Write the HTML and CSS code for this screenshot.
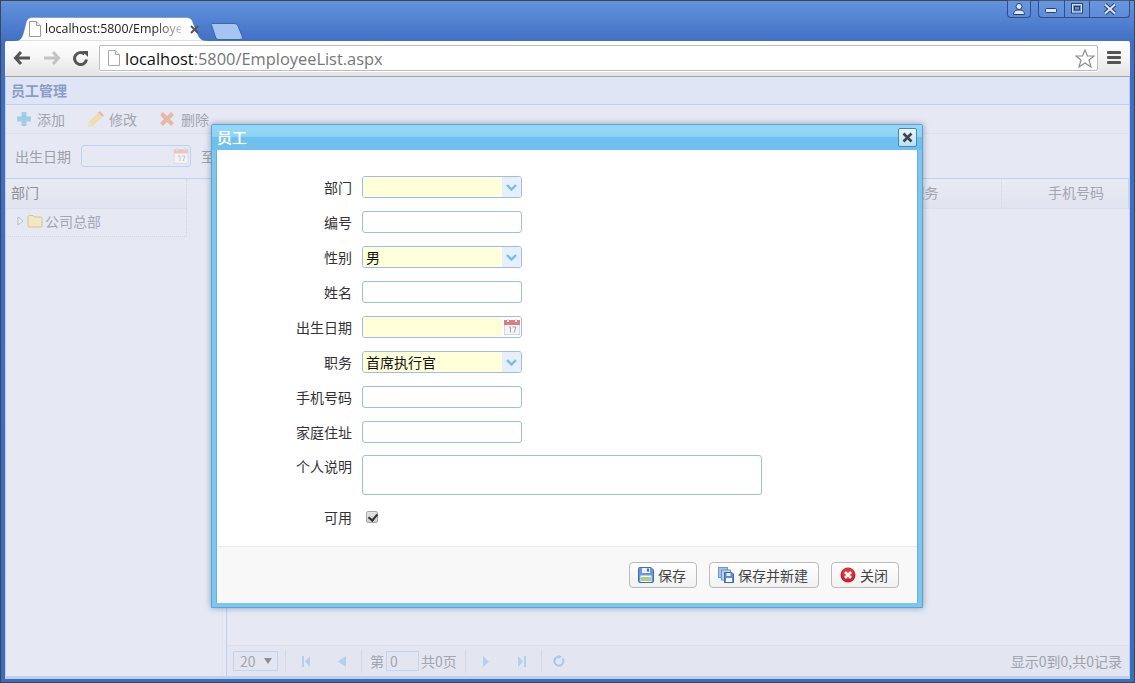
FILE: index.html
```html
<!DOCTYPE html>
<html lang="zh">
<head>
<meta charset="utf-8">
<title>员工管理</title>
<link rel="stylesheet" href="styles.css">
</head>
<body>
<div class="frame">
  <header class="titlebar">
    <div class="tabs">
      <div class="tab">
        <svg class="tab-shape" width="197" height="24" viewBox="0 0 197 24"><path d="M0 24C7 24 8 21 10 14L12 6C13 2 15 0.500 19 0.500H172C176 0.500 178 2 179 6L184 18C186 23 189 24 197 24Z" fill="url(#tabfill)" stroke="#3f68ad" stroke-opacity=".35"/><defs><linearGradient id="tabfill" x1="0" y1="0" x2="0" y2="1"><stop offset="0" stop-color="#fff"/><stop offset="1" stop-color="#fbfbfb"/></linearGradient></defs></svg>
        <svg class="page-ic" width="13" height="16" viewBox="0 0 13 16"><path d="M1.500.5H8.500L12.500 4.500V15.500H1.500Z" fill="#fff" stroke="#9a9a9a"/><path d="M8.500.5V4.500H12.500" fill="#eee" stroke="#9a9a9a"/></svg>
        <span class="tab-title">localhost:5800/Employe</span>
        <svg class="tab-x" width="9" height="9" viewBox="0 0 9 9"><path d="M1 1L8 8M8 1L1 8" stroke="#555" stroke-width="2"/></svg>
      </div>
      <svg class="newtab" width="32" height="17" viewBox="0 0 32 17"><path d="M1 .5H23C25 .5 26 1.500 27 3L31 13C32 15 31 16.500 29 16.500H8C6 16.500 5 15.500 4.500 14L.5 2C.2 1 .5 .5 1 .5Z" fill="#a5c5f0" stroke="#3c66ad"/></svg>
    </div>
    <div class="winctl">
      <div class="winbtn user"><svg width="14" height="12" viewBox="0 0 14 12"><circle cx="7" cy="3.500" r="3" fill="#dbe6f8" stroke="#2b3f66"/><path d="M1.500 11.500C1.500 8 4 7 7 7S12.500 8 12.500 11.500Z" fill="#dbe6f8" stroke="#2b3f66"/></svg></div>
      <div class="wingroup">
        <div class="winbtn min"><svg width="13" height="6" viewBox="0 0 13 6"><rect x=".5" y=".5" width="11" height="4" rx="1" fill="#dbe6f8" stroke="#2b3f66"/></svg></div>
        <div class="winbtn max"><svg width="13" height="11" viewBox="0 0 13 11"><rect x=".5" y=".5" width="11" height="9.500" fill="none" stroke="#2b3f66"/><rect x="1.500" y="1.500" width="9" height="7.500" fill="none" stroke="#dbe6f8" stroke-width="1"/><rect x="3.500" y="3.500" width="5" height="3.500" fill="#5d8bd3" stroke="#2b3f66"/></svg></div>
        <div class="winbtn close"><svg width="16" height="12" viewBox="0 0 16 12"><path d="M3 1.500L13 10.500M13 1.500L3 10.500" stroke="#2b3f66" stroke-width="4"/><path d="M3 1.500L13 10.500M13 1.500L3 10.500" stroke="#dbe6f8" stroke-width="2"/></svg></div>
      </div>
    </div>
  </header>

  <div class="navbar">
    <svg class="nav-ic" width="18" height="16" viewBox="0 0 18 16"><path d="M8 2L2.500 8L8 14M3 8H17" fill="none" stroke="#555" stroke-width="3"/></svg>
    <svg class="nav-ic" width="18" height="16" viewBox="0 0 18 16"><path d="M10 2L15.500 8L10 14M15 8H1" fill="none" stroke="#c3c3c3" stroke-width="3"/></svg>
    <svg class="nav-ic" width="18" height="16" viewBox="0 0 18 16"><path d="M14.500 9.500A6 6 0 1 1 12.500 4" fill="none" stroke="#555" stroke-width="3"/><path d="M10 1H16V7Z" fill="#555"/></svg>
    <div class="omnibox">
      <svg class="omni-page" width="13" height="16" viewBox="0 0 13 16"><path d="M1.500.5H8.500L12.500 4.500V15.500H1.500Z" fill="#fff" stroke="#aaa"/><path d="M8.500.5V4.500H12.500" fill="#eee" stroke="#aaa"/></svg>
      <span class="url"><b>localhost</b>:5800/EmployeeList.aspx</span>
      <svg class="star" width="20" height="19" viewBox="0 0 20 19"><path d="M10 1L12.500 7H19L14 11L16 18L10 14L4 18L6 11L1 7H7.500Z" fill="#fff" stroke="#8f8f8f" stroke-width="1.200"/></svg>
    </div>
    <div class="menu"><i></i><i></i><i></i></div>
  </div>

  <main class="page">
    <h1 class="page-title">员工管理</h1>
    <div class="toolbar">
      <span class="tool add">
        <svg width="16" height="16" viewBox="0 0 16 16"><path d="M5.500 1H10.500V5.500H15V10.500H10.500V15H5.500V10.500H1V5.500H5.500Z" fill="#9fcdea"/></svg>添加
      </span>
      <span class="tool edit">
        <svg width="17" height="17" viewBox="0 0 16 16"><path d="M.5 15.500L2 10L10.500 1.500L14.500 5.500L6 14Z" fill="#f0dcae"/><path d="M10.500 1.500L12 0L16 4L14.500 5.500Z" fill="#e8b9a4"/><path d="M.5 15.500L2 10L6 14Z" fill="#e9e2d0"/></svg>修改
      </span>
      <span class="tool del">
        <svg width="16" height="16" viewBox="0 0 16 16"><path d="M1 4L4 1L8 5L12 1L15 4L11 8L15 12L12 15L8 11L4 15L1 12L5 8Z" fill="#e6b9a4"/></svg>删除
      </span>
    </div>
    <div class="search">
      <label class="search-label">出生日期</label>
      <span class="search-date">
        <svg class="cal" width="16" height="16" viewBox="0 0 16 16"><rect x="1" y="1.500" width="14" height="14" fill="#f3f3f5" stroke="#dcdce2"/><rect x="1" y="1.500" width="14" height="4" fill="#eec3c3"/><rect x="3.500" y="0" width="2" height="3" fill="#ddd"/><rect x="10.500" y="0" width="2" height="3" fill="#ddd"/><path d="M5 8H7V13M9 8H12L10 13" fill="none" stroke="#c2c6cf"/></svg>
      </span>
      <span class="search-to">至</span>
    </div>
    <div class="panes">
      <aside class="tree">
        <div class="tree-head"><span>部门</span></div>
        <div class="tree-row">
          <svg width="7" height="10" viewBox="0 0 7 10"><path d="M1 1L6 5L1 9Z" fill="#f2f3f7" stroke="#b7bbc6"/></svg>
          <svg width="16" height="14" viewBox="0 0 16 14"><path d="M1 3C1 2 1.500 1.500 2.500 1.500H6L7.500 3H13.500C14.500 3 15 3.500 15 4.500V12C15 12.500 14.500 13 14 13H2C1.500 13 1 12.500 1 12Z" fill="#f2e8c4" stroke="#d2c594"/></svg>
          <span>公司总部</span>
        </div>
      </aside>
      <div class="splitter"></div>
      <section class="grid">
        <div class="grid-head">
          <span class="col-spacer"></span>
          <span class="col col-job">职务</span>
          <span class="col col-phone">手机号码</span>
        </div>
        <div class="grid-body"></div>
        <footer class="pager">
          <span class="pg-size">20<svg width="8" height="6" viewBox="0 0 8 6"><path d="M0 0H8L4 6Z" fill="#8a8d96"/></svg></span>
          <i class="pg-sep sep-first"></i>
          <span class="pg-btn"><svg width="8" height="11" viewBox="0 0 8 11"><path d="M0 0H2V11H0ZM8 0V11L3 5.500Z" fill="#b5d0ec"/></svg></span>
          <span class="pg-btn"><svg width="8" height="11" viewBox="0 0 8 11"><path d="M8 0V11L0 5.500Z" fill="#b5d0ec"/></svg></span>
          <i class="pg-sep"></i>
          <span class="pg-text pg-page">第</span>
          <span class="pg-input">0</span>
          <span class="pg-text">共0页</span>
          <i class="pg-sep sep-total"></i>
          <span class="pg-btn"><svg width="6" height="11" viewBox="0 0 6 11"><path d="M0 0V11L6 5.500Z" fill="#b5d0ec"/></svg></span>
          <span class="pg-btn"><svg width="8" height="11" viewBox="0 0 8 11"><path d="M6 0H8V11H6ZM0 0V11L5 5.500Z" fill="#b5d0ec"/></svg></span>
          <i class="pg-sep"></i>
          <span class="pg-btn pg-refresh"><svg width="12" height="12" viewBox="0 0 12 12"><path d="M9.500 3.500A4.500 4.500 0 1 1 5 1.800" fill="none" stroke="#a4c8e8" stroke-width="2"/><path d="M5 0L9 1.500L5.500 4Z" fill="#a4c8e8"/></svg></span>
          <span class="pg-info">显示0到0,共0记录</span>
        </footer>
      </section>
    </div>
  </main>
</div>

<div class="dialog">
  <div class="dlg-head">
    <span class="dlg-title">员工</span>
    <button class="dlg-close" type="button"><svg width="11" height="11" viewBox="0 0 11 11"><path d="M1.500 1.500L9.500 9.500M9.500 1.500L1.500 9.500" stroke="#444" stroke-width="2.600"/></svg></button>
  </div>
  <div class="dlg-main">
    <form class="form">
      <div class="row"><label>部门</label><span class="field req select"><span class="val"></span><span class="trig"><svg width="11" height="7" viewBox="0 0 11 7"><path d="M1 1L5.500 5.500L10 1" fill="none" stroke="#74bcef" stroke-width="2.400"/></svg></span></span></div>
      <div class="row"><label>编号</label><span class="field"></span></div>
      <div class="row"><label>性别</label><span class="field req select"><span class="val">男</span><span class="trig"><svg width="11" height="7" viewBox="0 0 11 7"><path d="M1 1L5.500 5.500L10 1" fill="none" stroke="#74bcef" stroke-width="2.400"/></svg></span></span></div>
      <div class="row"><label>姓名</label><span class="field"></span></div>
      <div class="row"><label>出生日期</label><span class="field req select"><span class="val"></span><span class="trig cal-trig"><svg width="16" height="16" viewBox="0 0 16 16"><rect x=".5" y="1.500" width="15" height="14" fill="#f4f4f4" stroke="#d8d8d8"/><rect x="0" y="1" width="16" height="5" fill="#e27b7b"/><rect x="3" y="0" width="2" height="3" fill="#e8e8e8"/><rect x="11" y="0" width="2" height="3" fill="#e8e8e8"/><path d="M5 8H6.500V13.500M8.500 8H12L10 13.500" fill="none" stroke="#9aa3ad"/></svg></span></span></div>
      <div class="row"><label>职务</label><span class="field req select"><span class="val">首席执行官</span><span class="trig"><svg width="11" height="7" viewBox="0 0 11 7"><path d="M1 1L5.500 5.500L10 1" fill="none" stroke="#74bcef" stroke-width="2.400"/></svg></span></span></div>
      <div class="row"><label>手机号码</label><span class="field"></span></div>
      <div class="row"><label>家庭住址</label><span class="field"></span></div>
      <div class="row row-area"><label>个人说明</label><span class="area"></span></div>
      <div class="row row-check"><label>可用</label><input class="check" type="checkbox" checked></div>
    </form>
    <div class="dlg-foot">
      <button class="btn" type="button"><svg width="16" height="16" viewBox="0 0 16 16"><path d="M.5 1.500C.5 1 1 .5 1.500 .5H13L15.500 3V14.500C15.500 15 15 15.500 14.500 15.500H1.500C1 15.500 .5 15 .5 14.500Z" fill="#6d97d6" stroke="#3f6cb0"/><rect x="4" y="1" width="8" height="5" fill="#e9eff8"/><rect x="9" y="1.500" width="2" height="3" fill="#3f6cb0"/><rect x="2.500" y="8.500" width="11" height="6.500" fill="#fff"/><path d="M3 11H13M3 13H13" stroke="#8cc06a" stroke-width="1.500"/></svg>保存</button>
      <button class="btn" type="button"><svg width="16" height="16" viewBox="0 0 16 16"><rect x=".5" y=".5" width="9" height="10" fill="#a6c1e6" stroke="#6f95cc"/><rect x="3.500" y="3" width="9" height="10" fill="#bcd0ec" stroke="#6f95cc"/><path d="M6.500 5.500H14L15.500 7V15.500H6.500Z" fill="#5f8cd0" stroke="#3f6cb0"/><rect x="8" y="11" width="6" height="4" fill="#fff"/><rect x="8.500" y="6" width="4" height="3" fill="#e9eff8"/></svg>保存并新建</button>
      <button class="btn" type="button"><svg width="16" height="16" viewBox="0 0 16 16"><circle cx="8" cy="8" r="7.500" fill="#d01f2a"/><circle cx="8" cy="6.500" r="5.500" fill="#e8454d" opacity=".6"/><path d="M5 5L11 11M11 5L5 11" stroke="#fff" stroke-width="2.600"/></svg>关闭</button>
    </div>
  </div>
</div>
</body>
</html>
```

FILE: styles.css
```css
* { box-sizing: border-box; }
html, body { margin: 0; height: 683px; overflow: hidden; }
body { font-family: "Noto Sans CJK SC", "Open Sans", sans-serif; font-size: 14px; color: #333; background: #3d6bbd; }

.frame {
  height: 683px;
  display: flex;
  flex-direction: column;
  padding: 0 4px 3px 4px;
  border: 1px solid #3d4654;
  background: linear-gradient(#6393dc 0, #3f6ec4 42px, #3d6bbd 100%);
}

.titlebar { height: 40px; display: flex; justify-content: space-between; flex: none; }
.tabs { display: flex; align-items: flex-end; padding-left: 9px; }
.tab { position: relative; width: 197px; height: 24px; display: flex; align-items: center; padding: 0 0 0 14px; }
.tab-shape { position: absolute; left: 0; top: 0; }
.page-ic, .tab-title, .tab-x { position: relative; }
.tab-title { margin-left: 4px; width: 136px; white-space: nowrap; font: 12.4px/24px "Open Sans", sans-serif; color: #222; -webkit-mask-image: linear-gradient(90deg, #000 80%, rgba(0, 0, 0, .25)); mask-image: linear-gradient(90deg, #000 80%, rgba(0, 0, 0, .25)); }
.tab-x { margin-left: 9px; }
.newtab { margin: 0 0 1px 0; }

.winctl { display: flex; gap: 7px; align-items: flex-start; margin-top: -1px; }
.winbtn { height: 18px; display: flex; align-items: center; justify-content: center; border: 1px solid #2f4f86; border-top: 0; background: rgba(120, 165, 230, .25); }
.user { width: 24px; border-radius: 0 0 4px 4px; }
.wingroup { display: flex; }
.min { width: 26px; border-radius: 0 0 0 4px; border-right: 0; padding-top: 5px; }
.max { width: 25px; border-right: 0; }
.close { width: 41px; border-radius: 0 0 4px 0; }

.navbar { height: 36px; flex: none; display: flex; align-items: center; padding: 0 9px 0 8px; background: linear-gradient(#fff, #f6f6f6 45%, #e3e3e3); border-bottom: 1px solid #a5a5a5; border-radius: 2px 2px 0 0; }
.nav-ic { margin: 0 11px 2px 0; flex: none; }
.nav-ic:first-child { margin-right: 12px; }
.nav-ic:nth-child(3) { margin-right: 9px; }
.omnibox { flex: 1; height: 26px; margin-top: -1px; display: flex; align-items: center; padding: 0 2px 0 7px; background: #fff; border: 1px solid #bdbdbd; border-radius: 2px; box-shadow: 0 1px 0 #fff; }
.omni-page { flex: none; }
.url { margin: 2px 0 0 5px; flex: 1; font: 16.4px/24px "Open Sans", sans-serif; color: #767676; white-space: nowrap; }
.url b { font-weight: 400; color: #111; }
.menu { width: 14px; margin-left: 9px; margin-top: -2px; display: flex; flex-direction: column; gap: 2px; }
.menu i { height: 3px; background: #555; border-radius: 1px; }

.page { flex: 1; min-height: 0; display: flex; flex-direction: column; background: #e6e9f4; border-left: 1px solid #bcd0ef; color: #9a9ca8; border-bottom: 3px solid #bcd0ef; border-right: 1px solid #bcd0ef; }
.page-title { margin: 0; height: 28px; flex: none; padding-left: 5px; font: 700 14px/27px "Noto Sans CJK SC", sans-serif; color: #8b9dc6; background: #dfe5f4; border-bottom: 1px solid #bcd0ef; }

.toolbar { height: 29px; flex: none; display: flex; align-items: center; border-bottom: 1px solid #dde1ec; padding-left: 10px; }
.tool { display: flex; align-items: center; gap: 5px; line-height: 20px; color: #a2a4ae; }
.tool svg { flex: none; }
.add { width: 71px; }
.edit { width: 72px; }
.del { gap: 6px; }

.search { height: 44px; flex: none; display: flex; align-items: center; padding-left: 9px; color: #9e9fa6; }
.search-label { width: 66px; }
.search-date { width: 110px; height: 22px; border: 1px solid #bfd2f2; border-radius: 3px; display: flex; justify-content: flex-end; align-items: center; padding-right: 1px; }
.search-to { margin-left: 10px; }

.panes { flex: 1; min-height: 0; display: flex; }
.tree { width: 216px; flex: none; border-top: 1px solid #bcd0ef; }
.tree-head { width: 181px; height: 30px; padding-left: 5px; line-height: 27px; background: linear-gradient(#e9ebf4, #e1e4ee); border-bottom: 1px solid #dcdfea; border-right: 1px dotted #d3d6e0; color: #8e8f99; }
.tree-row { width: 181px; height: 28px; display: flex; align-items: center; padding: 0 0 4px 11px; border-bottom: 1px dotted #d3d6e0; border-right: 1px dotted #d3d6e0; color: #a2a6b5; }
.tree-row svg:nth-child(2) { margin-left: 3px; margin-right: 2px; }

.splitter { width: 5px; flex: none; background: #e6e9f4; border-right: 1px solid #bcd0ef; border-left: 1px solid #dfe3ef; }

.grid { flex: 1; min-width: 0; display: flex; flex-direction: column; }
.grid-head { height: 31px; flex: none; display: flex; border-top: 1px solid #bcd0ef; border-bottom: 1px solid #dcdfea; background: linear-gradient(#e9ebf4, #e1e4ee); line-height: 27px; color: #a4a5ae; border-right: 1px solid #cbd6ee; }
.col-spacer { flex: 1; }
.col { text-align: center; }
.col-job { width: 160px; padding-left: 6px; border-right: 1px dotted #d3d6e0; }
.col-phone { width: 126px; padding-left: 22px; }
.grid-body { flex: 1; }

.pager { height: 31px; flex: none; display: flex; align-items: center; padding-left: 6px; background: #e3e6f1; border-top: 1px solid #dcdfea; color: #a4a5ae; }
.pg-size { width: 45px; height: 20px; display: flex; align-items: center; justify-content: space-between; padding: 0 5px 0 6px; border: 1px solid #c3d4ef; line-height: 18px; }
.pg-sep { width: 1px; height: 23px; margin: 0 2px 0 1px; background: #d6dae6; flex: none; }
.sep-first { margin-left: 7px; }
.sep-total { margin-left: 8px; }
.pg-btn { width: 36px; height: 20px; flex: none; display: flex; align-items: center; justify-content: center; }
.pg-refresh { width: 30px; }
.pg-text { line-height: 20px; white-space: nowrap; }
.pg-page { margin-left: 6px; }
.pg-input { width: 33px; height: 20px; margin: 0 2px; padding-left: 3px; border: 1px solid #c3d4ef; line-height: 18px; }
.pg-info { margin-left: auto; padding-right: 7px; white-space: nowrap; color: #a0a1ab; }

.dialog { position: absolute; left: 211px; top: 124px; width: 712px; height: 484px; display: flex; flex-direction: column; padding: 0 5px 4px; background: #7cc6f0; border: 1px solid #5aa5d4; box-shadow: 0 0 6px rgba(70, 85, 120, .55); border-radius: 2px 2px 0 0; }
.dlg-head { height: 25px; flex: none; display: flex; justify-content: space-between; align-items: center; margin: 0 -5px; padding: 0 5px 0 5px; background: linear-gradient(#97d8f6 0, #8ed3f5 45%, #6fc0ee 50%, #6fc0ee 100%); }
.dlg-title { font: 400 15px/20px "Noto Sans CJK SC", sans-serif; color: #fff; text-shadow: 0 0 1px #fff; margin-bottom: 2px; }
.dlg-close { width: 19px; height: 19px; padding: 0; display: flex; align-items: center; justify-content: center; background: linear-gradient(#eaf6fd, #b7e0f6); border: 1px solid #4e87ad; border-radius: 2px; }
.dlg-main { flex: 1; min-height: 0; display: flex; flex-direction: column; background: #fff; border: 1px solid #6eb0dd; border-width: 0 1px; margin: 0 -1px; }

.form { flex: 1; padding-top: 26px; display: flex; flex-direction: column; gap: 13px; color: #333; }
.row { display: grid; grid-template-columns: 135px auto; column-gap: 10px; justify-content: start; height: 22px; }
.row label { text-align: right; line-height: 22px; }
.field { width: 160px; height: 22px; display: flex; border: 1px solid #9dbde9; border-radius: 3px; overflow: hidden; }
.req .val { flex: 1; background: #ffffd9; padding-left: 3px; line-height: 20px; color: #111; font-size: 14px; }
.trig { width: 19px; display: flex; align-items: center; justify-content: center; background: #e6f0fc; }
.cal-trig { background: #fff; }
.row-area { margin-top: -1px; height: 40px; }
.area { width: 400px; height: 40px; border: 1px solid #9dbde9; border-radius: 3px; }
.row-check { margin-top: -2px; }
.check { appearance: none; -webkit-appearance: none; position: relative; margin: 5px 0 0 4px; width: 12px; height: 12px; background: linear-gradient(#e4e4e4, #cfcfcf); border: 1px solid #a9a9a9; border-radius: 2px; }
.check::after { content: ""; position: absolute; left: 3px; top: 0; width: 4px; height: 7px; border: solid #333; border-width: 0 2px 2px 0; transform: rotate(40deg); }

.dlg-foot { height: 57px; flex: none; display: flex; justify-content: flex-end; gap: 12px; padding: 15px 18px 0 0; background: #f8f8f8; border-top: 1px solid #ececec; }
.btn { height: 26px; padding: 0 10px 1px 8px; display: flex; align-items: center; gap: 4px; font: 14px/22px "Noto Sans CJK SC", sans-serif; color: #444; background: linear-gradient(#fff, #f1f1f1); border: 1px solid #bbb; border-radius: 4px; }
.btn svg { flex: none; }
```
